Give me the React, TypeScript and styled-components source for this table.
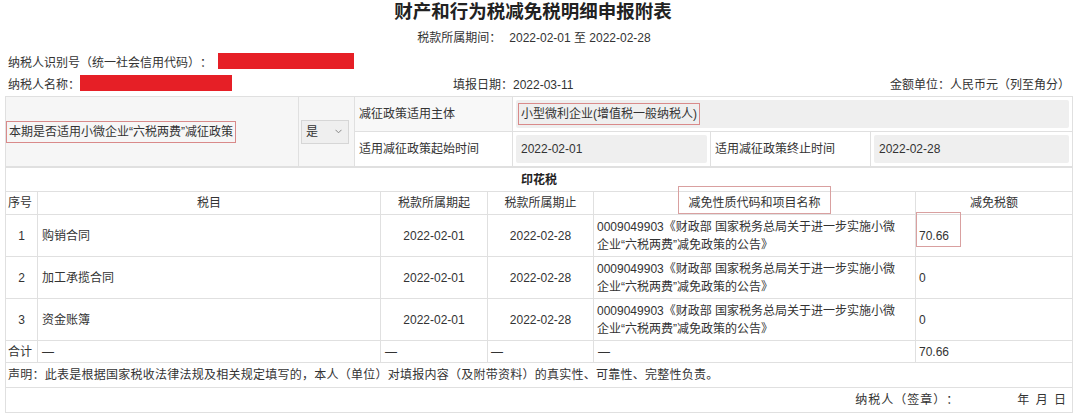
import React from "react";
import styled, { createGlobalStyle } from "styled-components";

const Global = createGlobalStyle`
  html, body { margin: 0; padding: 0; background: #fff; }
  body {
    font-family: "Liberation Sans", "Noto Sans CJK SC", sans-serif;
    font-size: 12px;
    color: #333;
    text-spacing-trim: space-all;
  }
`;

const Page = styled.div`
  width: 1080px;
  height: 416px;
  overflow: hidden;
  background: #fff;
`;

const Title = styled.h1`
  margin: 0;
  height: 26px;
  line-height: 24px;
  text-align: center;
  font-size: 18.5px;
  font-weight: bold;
  color: #222;
  padding-right: 14px;
`;

const Period = styled.div`
  height: 24px;
  line-height: 24px;
  text-align: center;
  color: #333;
  padding-right: 12px;
`;

const Gap = styled.span<{ $w: number }>`
  display: inline-block;
  width: ${(p) => p.$w}px;
`;

const InfoRow = styled.div`
  display: grid;
  grid-template-columns: 445px 1fr auto;
  align-items: center;
  height: 22px;
  padding: 0 10px 0 8px;
`;

const InfoItem = styled.div`
  display: flex;
  align-items: center;
  white-space: nowrap;
`;

const Redact = styled.span<{ $w: number; $gap: number }>`
  display: inline-block;
  width: ${(p) => p.$w}px;
  margin-left: ${(p) => p.$gap}px;
  height: 16px;
  background: #e61f26;
`;

const Table = styled.table`
  border-collapse: collapse;
  table-layout: fixed;
  width: 1067px;
  margin-left: 5px;
  & td {
    border: 1px solid #e0e0e0;
    padding: 0;
    vertical-align: middle;
  }
`;

const TopTable = styled(Table)`
  margin-top: 2px;
`;

const Cell = styled.td<{ $bg?: string; $align?: string; $pad?: string; $h?: number }>`
  background: ${(p) => p.$bg || "#fff"};
  text-align: ${(p) => p.$align || "left"};
  padding: ${(p) => p.$pad || "0 4px"} !important;
  height: ${(p) => (p.$h ? `${p.$h}px` : "auto")};
  line-height: 18px;
  white-space: nowrap;
  overflow: visible;
`;

const WrapCell = styled(Cell)`
  white-space: normal;
  line-height: 18px;
`;

const Marked = styled.span`
  display: inline-block;
  border: 1px solid #d98a8a;
  padding: 1px 2px;
  line-height: 18px;
`;

const Annotated = styled.span<{ $t: number; $r: number; $b: number; $l: number }>`
  position: relative;
  display: inline-block;
  &::after {
    content: "";
    position: absolute;
    top: ${(p) => -p.$t}px;
    right: ${(p) => -p.$r}px;
    bottom: ${(p) => -p.$b}px;
    left: ${(p) => -p.$l}px;
    border: 1px solid #d9a0a0;
    pointer-events: none;
  }
`;

const GrayInput = styled.div`
  background: #efefef;
  height: 28px;
  display: flex;
  align-items: center;
  padding: 0 5px;
  border-radius: 2px;
`;

const SelectBox = styled.div`
  display: flex;
  align-items: center;
  justify-content: space-between;
  width: 48px;
  height: 24px;
  margin: 0 0 0 2px;
  background: #efefef;
  border: 1px solid #d6d6d6;
  padding: 0 6px 0 4px;
  box-sizing: border-box;
`;

const Chevron = styled.svg`
  width: 7px;
  height: 5px;
`;

const Bold = styled.span`
  font-weight: bold;
  color: #222;
`;

const Statement = styled.span`
  letter-spacing: 0.25px;
`;

const SignRow = styled.div`
  display: flex;
  justify-content: flex-end;
  gap: 58px;
  padding-right: 2px;
`;

const SignLabel = styled.span`
  letter-spacing: 1px;
`;

const Words = styled.span`
  word-spacing: 3px;
`;

const policy = "0009049903《财政部 国家税务总局关于进一步实施小微企业“六税两费”减免政策的公告》";

const rows = [
  { no: "1", name: "购销合同", amount: "70.66", marked: true },
  { no: "2", name: "加工承揽合同", amount: "0", marked: false },
  { no: "3", name: "资金账簿", amount: "0", marked: false },
];

export default function App() {
  return (
    <Page>
      <Global />
      <Title>财产和行为税减免税明细申报附表</Title>
      <Period>
        税款所属期间：<Gap $w={8} />2022-02-01 至 2022-02-28
      </Period>
      <InfoRow>
        <InfoItem>
          纳税人识别号（统一社会信用代码）：<Redact $w={136} $gap={6} />
        </InfoItem>
        <span />
        <span />
      </InfoRow>
      <InfoRow>
        <InfoItem>
          纳税人名称：<Redact $w={152} $gap={0} />
        </InfoItem>
        <InfoItem>填报日期：2022-03-11</InfoItem>
        <InfoItem>金额单位：人民币元（列至角分）</InfoItem>
      </InfoRow>

      <TopTable>
        <colgroup>
          <col style={{ width: 293 }} />
          <col style={{ width: 56 }} />
          <col style={{ width: 158 }} />
          <col style={{ width: 198 }} />
          <col style={{ width: 160 }} />
          <col style={{ width: 202 }} />
        </colgroup>
        <tbody>
          <tr>
            <Cell rowSpan={2} $bg="#f6f6f6" $pad="0">
              <Marked>本期是否适用小微企业“六税两费”减征政策</Marked>
            </Cell>
            <Cell rowSpan={2} $bg="#f6f6f6" $pad="0">
              <SelectBox>
                <span>是</span>
                <Chevron viewBox="0 0 7 5">
                  <path d="M0.5 0.8 L3.5 3.8 L6.5 0.8" fill="none" stroke="#888" strokeWidth="1" />
                </Chevron>
              </SelectBox>
            </Cell>
            <Cell $h={34} $bg="#f8f8f8">减征政策适用主体</Cell>
            <Cell colSpan={3} $pad="3px 3px">
              <GrayInput style={{ paddingLeft: 2 }}>
                <Marked>小型微利企业(增值税一般纳税人)</Marked>
              </GrayInput>
            </Cell>
          </tr>
          <tr>
            <Cell $h={34}>适用减征政策起始时间</Cell>
            <Cell $pad="3px 3px">
              <GrayInput>2022-02-01</GrayInput>
            </Cell>
            <Cell>适用减征政策终止时间</Cell>
            <Cell $pad="3px 3px">
              <GrayInput>2022-02-28</GrayInput>
            </Cell>
          </tr>
        </tbody>
      </TopTable>

      <Table>
        <colgroup>
          <col style={{ width: 32 }} />
          <col style={{ width: 343 }} />
          <col style={{ width: 107 }} />
          <col style={{ width: 106 }} />
          <col style={{ width: 322 }} />
          <col style={{ width: 157 }} />
        </colgroup>
        <tbody>
          <tr>
            <Cell colSpan={6} $align="center" $h={23}>
              <Bold>印花税</Bold>
            </Cell>
          </tr>
          <tr>
            <Cell $h={22} $pad="0 2px">序号</Cell>
            <Cell $align="center">税目</Cell>
            <Cell $align="center">税款所属期起</Cell>
            <Cell $align="center">税款所属期止</Cell>
            <Cell $align="center">
              <Annotated $t={8} $r={10} $b={2} $l={10}>减免性质代码和项目名称</Annotated>
            </Cell>
            <Cell $align="center">减免税额</Cell>
          </tr>
          {rows.map((r) => (
            <tr key={r.no}>
              <Cell $align="center" $h={41}>{r.no}</Cell>
              <Cell>{r.name}</Cell>
              <Cell $align="center">2022-02-01</Cell>
              <Cell $align="center">2022-02-28</Cell>
              <WrapCell $pad="0 16px 0 3px">{policy}</WrapCell>
              <Cell $pad="0 3px">
                {r.marked ? (
                  <Annotated $t={15} $r={12} $b={2} $l={3}>{r.amount}</Annotated>
                ) : (
                  r.amount
                )}
              </Cell>
            </tr>
          ))}
          <tr>
            <Cell $h={21} $pad="0 2px">合计</Cell>
            <Cell>—</Cell>
            <Cell>—</Cell>
            <Cell $pad="0 3px">—</Cell>
            <Cell>—</Cell>
            <Cell $pad="0 3px">70.66</Cell>
          </tr>
          <tr>
            <Cell colSpan={6} $h={24} $pad="0 2px">
              <Statement>
                声明：此表是根据国家税收法律法规及相关规定填写的，本人（单位）对填报内容（及附带资料）的真实性、可靠性、完整性负责。
              </Statement>
            </Cell>
          </tr>
          <tr>
            <Cell colSpan={6} $h={24} $pad="0 4px">
              <SignRow>
                <SignLabel>纳税人（签章）：</SignLabel>
                <Words>年 月 日</Words>
              </SignRow>
            </Cell>
          </tr>
        </tbody>
      </Table>
    </Page>
  );
}
